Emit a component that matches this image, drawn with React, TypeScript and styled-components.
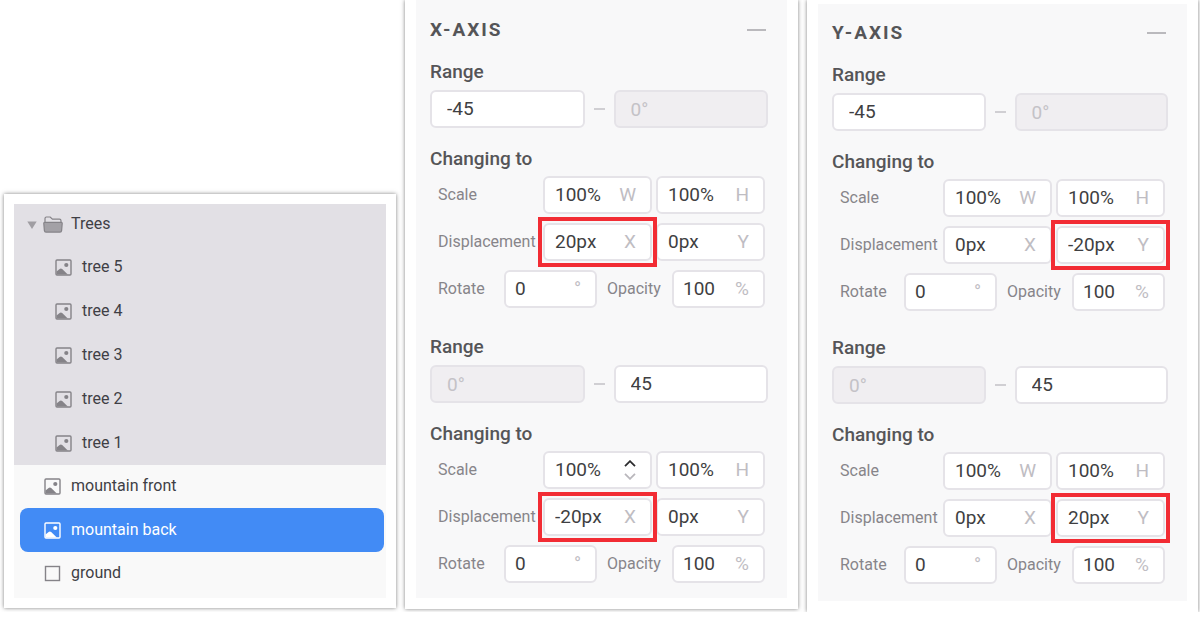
import React, { useId } from "react";
import styled, { createGlobalStyle, css } from "styled-components";

const GlobalStyle = createGlobalStyle`
  *, *::before, *::after { box-sizing: border-box; }
  body {
    margin: 0;
    background: #ffffff;
    color: #3f3f42;
    font-family: Roboto, "Liberation Sans", sans-serif;
  }
  button, input { font: inherit; color: inherit; }
`;

const Page = styled.main`
  display: grid;
  grid-template-columns: 392fr 393fr 391fr;
  gap: 9px;
  align-items: start;
  padding: 0 2px 0 4px;
`;

const Card = styled.section<{ $offset?: number; $padTop: number; $pad: number }>`
  min-width: 0;
  margin-top: ${(p) => p.$offset ?? 0}px;
  padding: ${(p) => p.$padTop}px ${(p) => p.$pad}px ${(p) => p.$pad}px;
  background: #ffffff;
  box-shadow: 0 0 4px rgba(0, 0, 0, 0.5);
`;

/* ---------- layer list ---------- */

const Layers = styled.ul`
  margin: 0;
  padding: 0 0 3px;
  list-style: none;
  background: #f9f9f9;
`;

const LayerGroup = styled.li`
  background: #e2e0e5;
`;

const GroupItems = styled.ul`
  margin: 0;
  padding: 0;
  list-style: none;
`;

const LayerItem = styled.li`
  padding: 0 2px 0 6px;
`;

const LayerButton = styled.button<{ $kind?: "group" | "child" | "selected" }>`
  display: flex;
  align-items: center;
  gap: 10px;
  width: 100%;
  height: 43px;
  padding: 0 0 0 24px;
  border: 0;
  border-radius: 8px;
  background: none;
  color: #3f3f45;
  font-size: 16px;
  line-height: 24px;
  text-align: left;
  ${(p) =>
    p.$kind === "group" &&
    css`
      height: 41px;
      padding-left: 7px;
      gap: 6px;
    `}
  ${(p) =>
    p.$kind === "child" &&
    css`
      height: 44px;
      padding-left: 35px;
    `}
  ${(p) =>
    p.$kind === "selected" &&
    css`
      height: 44px;
      background: #428bf5;
      color: #ffffff;
    `}
`;

const LayerName = styled.span`
  padding-bottom: 1px;
`;

const GroupName = styled(LayerName)`
  padding-left: 2px;
`;

const Glyph = styled.svg`
  display: block;
  flex: none;
  color: #858388;
`;

const LightGlyph = styled(Glyph)`
  color: #ffffff;
`;

const ImageShapes = () => (
  <>
    <rect x="1" y="1" width="15" height="15" rx="1" fill="none" stroke="currentColor" strokeWidth="1.4" />
    <circle cx="11.3" cy="6" r="2.1" fill="currentColor" />
    <path d="M1.5 15.5V12.4L4.6 10Q5.9 9.2 7.2 10L12.8 15.5Z" fill="currentColor" />
  </>
);

function ImageIcon({ light }: { light?: boolean }) {
  const Icon = light ? LightGlyph : Glyph;
  return (
    <Icon width="17" height="17" viewBox="0 0 17 17" aria-hidden="true">
      <ImageShapes />
    </Icon>
  );
}

function SquareIcon() {
  return (
    <Glyph width="17" height="17" viewBox="0 0 17 17" aria-hidden="true">
      <rect x="1.5" y="1.5" width="14" height="14" fill="none" stroke="currentColor" strokeWidth="1.4" />
    </Glyph>
  );
}

function ArrowIcon() {
  return (
    <Glyph width="10" height="8" viewBox="0 0 10 8" aria-hidden="true">
      <path d="M0.3 0.5H9.7L5 8Z" fill="#a09ea3" />
    </Glyph>
  );
}

function FolderIcon() {
  return (
    <Glyph width="20" height="17" viewBox="0 0 20 17" aria-hidden="true">
      <path
        d="M2 6V2.4Q2 1 3.4 1H7.2L9.4 3.2H16.4Q18 3.2 18 4.8V6"
        fill="none"
        stroke="currentColor"
        strokeWidth="1.2"
      />
      <path
        d="M1.8 6.4H18.2Q19.3 6.4 19.2 7.5L18.6 14.6Q18.4 16.1 17 16.1H3Q1.6 16.1 1.4 14.6L0.8 7.5Q0.7 6.4 1.8 6.4Z"
        fill="#a3a1a6"
        stroke="currentColor"
        strokeWidth="1.2"
      />
    </Glyph>
  );
}

/* ---------- axis settings ---------- */

const Settings = styled.div<{ $padTop: number; $padBottom: number }>`
  padding: ${(p) => p.$padTop}px 19px ${(p) => p.$padBottom}px 14px;
  background: #f8f8f9;
`;

const AxisHeader = styled.header`
  display: flex;
  align-items: center;
  justify-content: space-between;
  height: 24px;
  margin-bottom: 18px;
  padding-right: 2px;
`;

const AxisTitle = styled.h2`
  margin: 0;
  color: #555558;
  font-size: 19px;
  line-height: 24px;
  font-weight: 700;
  letter-spacing: 2px;
`;

const CollapseButton = styled.button`
  display: flex;
  align-items: center;
  height: 24px;
  padding: 0;
  border: 0;
  background: none;

  &::before {
    content: "";
    width: 19px;
    height: 2px;
    background: #bab9bd;
  }
`;

const Steps = styled.div<{ $gap: number }>`
  display: flex;
  flex-direction: column;
  gap: ${(p) => p.$gap}px;
`;

const Heading = styled.h3`
  margin: 0;
  color: #555558;
  font-size: 19px;
  line-height: 24px;
  font-weight: 500;
`;

const RangeRow = styled.div`
  display: flex;
  align-items: center;
  margin: 6px 0 19px;
`;

const RangeInput = styled.input`
  flex: 1;
  min-width: 0;
  height: 38px;
  padding: 0 15px 2px;
  border: 2px solid #e5e3e8;
  border-radius: 6px;
  background: #ffffff;
  font-size: 19px;

  &:disabled {
    padding: 1px 15px 0;
    background: #f0eef1;
    color: #c4c2c7;
  }
`;

const Dash = styled.span`
  width: 11px;
  height: 2px;
  margin: 0 9px;
  background: #d0cfd3;
`;

const Rows = styled.div`
  display: grid;
  gap: 9px;
  margin-top: 5px;
  padding: 0 3px 0 8px;
`;

const Row = styled.div`
  display: flex;
  align-items: center;
  gap: 4px;
`;

const SplitRow = styled(Row)`
  gap: 0;
`;

const Label = styled.label`
  flex: 1;
  min-width: 0;
  color: #87858a;
  font-size: 16px;
  line-height: 24px;
  white-space: nowrap;
`;

const MiddleLabel = styled(Label)`
  flex: 0 0 75px;
  padding-left: 10px;
`;

const Field = styled.div<{ $narrow?: boolean; $marked?: boolean }>`
  position: relative;
  display: flex;
  align-items: center;
  flex: none;
  width: ${(p) => (p.$narrow ? 93 : 109)}px;
  height: 38px;
  padding: 0 14px 0 ${(p) => (p.$narrow ? 9 : 10)}px;
  border: 2px solid #e5e3e8;
  border-radius: 6px;
  background: #ffffff;
  ${(p) =>
    p.$marked &&
    css`
      z-index: 1;
      &::after {
        content: "";
        position: absolute;
        inset: -8px -7px;
        border: 4px solid #f22c34;
        pointer-events: none;
      }
    `}
`;

const FieldInput = styled.input`
  flex: 1;
  width: 0;
  min-width: 0;
  padding: 0;
  border: 0;
  background: none;
  font-size: 19px;
  line-height: 24px;
  outline: none;
`;

const Unit = styled.span`
  color: #bfbdc3;
  font-size: 19px;
  line-height: 24px;
`;

const Stepper = styled.span`
  display: grid;
  gap: 6px;
`;

const StepButton = styled.button<{ $faded?: boolean }>`
  display: block;
  padding: 0;
  border: 0;
  background: none;
  color: ${(p) => (p.$faded ? "#b9b7bc" : "#2c2c2e")};

  svg {
    display: block;
  }
`;

type FieldProps = {
  id?: string;
  name?: string;
  value: string;
  unit: string;
  narrow?: boolean;
  marked?: boolean;
};

function ValueField({ id, name, value, unit, narrow, marked }: FieldProps) {
  return (
    <Field $narrow={narrow} $marked={marked}>
      <FieldInput id={id} aria-label={name} defaultValue={value} />
      {unit === "stepper" ? (
        <Stepper>
          <StepButton type="button" aria-label="Increase">
            <svg width="12" height="7" viewBox="0 0 12 7" aria-hidden="true">
              <path d="M1 6.2L6 1.2L11 6.2" fill="none" stroke="currentColor" strokeWidth="1.8" />
            </svg>
          </StepButton>
          <StepButton type="button" aria-label="Decrease" $faded>
            <svg width="12" height="7" viewBox="0 0 12 7" aria-hidden="true">
              <path d="M1 0.8L6 5.8L11 0.8" fill="none" stroke="currentColor" strokeWidth="1.8" />
            </svg>
          </StepButton>
        </Stepper>
      ) : (
        <Unit>{unit}</Unit>
      )}
    </Field>
  );
}

type StepData = {
  from: string | null;
  to: string | null;
  x: string;
  y: string;
  marked: "x" | "y";
  stepper?: boolean;
};

function RangeBox({ name, value }: { name: string; value: string | null }) {
  return <RangeInput aria-label={name} defaultValue={value ?? "0°"} disabled={value === null} />;
}

function AxisStep({ data }: { data: StepData }) {
  const id = useId();
  return (
    <div>
      <Heading>Range</Heading>
      <RangeRow>
        <RangeBox name="Range from" value={data.from} />
        <Dash />
        <RangeBox name="Range to" value={data.to} />
      </RangeRow>
      <Heading>Changing to</Heading>
      <Rows>
        <Row>
          <Label htmlFor={`${id}-scale`}>Scale</Label>
          <ValueField id={`${id}-scale`} value="100%" unit={data.stepper ? "stepper" : "W"} />
          <ValueField name="Scale height" value="100%" unit="H" />
        </Row>
        <Row>
          <Label htmlFor={`${id}-move`}>Displacement</Label>
          <ValueField id={`${id}-move`} value={data.x} unit="X" marked={data.marked === "x"} />
          <ValueField name="Displacement Y" value={data.y} unit="Y" marked={data.marked === "y"} />
        </Row>
        <SplitRow>
          <Label htmlFor={`${id}-rotate`}>Rotate</Label>
          <ValueField id={`${id}-rotate`} value="0" unit="°" narrow />
          <MiddleLabel htmlFor={`${id}-opacity`}>Opacity</MiddleLabel>
          <ValueField id={`${id}-opacity`} value="100" unit="%" narrow />
        </SplitRow>
      </Rows>
    </div>
  );
}

type AxisProps = {
  title: string;
  padTop: number;
  padBottom: number;
  gap: number;
  steps: StepData[];
};

function AxisSettings({ title, padTop, padBottom, gap, steps }: AxisProps) {
  return (
    <Settings $padTop={padTop} $padBottom={padBottom}>
      <AxisHeader>
        <AxisTitle>{title}</AxisTitle>
        <CollapseButton type="button" aria-label={`Collapse ${title}`} />
      </AxisHeader>
      <Steps $gap={gap}>
        {steps.map((step, i) => (
          <AxisStep key={i} data={step} />
        ))}
      </Steps>
    </Settings>
  );
}

const xSteps: StepData[] = [
  { from: "-45", to: null, x: "20px", y: "0px", marked: "x" },
  { from: null, to: "45", x: "-20px", y: "0px", marked: "x", stepper: true },
];

const ySteps: StepData[] = [
  { from: "-45", to: null, x: "0px", y: "-20px", marked: "y" },
  { from: null, to: "45", x: "0px", y: "20px", marked: "y" },
];

const trees = ["tree 5", "tree 4", "tree 3", "tree 2", "tree 1"];

export default function App() {
  return (
    <>
      <GlobalStyle />
      <Page>
        <Card $offset={194} $padTop={10} $pad={10}>
          <Layers>
            <LayerGroup>
              <LayerItem as="div">
                <LayerButton type="button" $kind="group" aria-expanded="true">
                  <ArrowIcon />
                  <FolderIcon />
                  <GroupName>Trees</GroupName>
                </LayerButton>
              </LayerItem>
              <GroupItems>
                {trees.map((name) => (
                  <LayerItem key={name}>
                    <LayerButton type="button" $kind="child">
                      <ImageIcon />
                      <LayerName>{name}</LayerName>
                    </LayerButton>
                  </LayerItem>
                ))}
              </GroupItems>
            </LayerGroup>
            <LayerItem>
              <LayerButton type="button">
                <ImageIcon />
                <LayerName>mountain front</LayerName>
              </LayerButton>
            </LayerItem>
            <LayerItem>
              <LayerButton type="button" $kind="selected" aria-pressed="true">
                <ImageIcon light />
                <LayerName>mountain back</LayerName>
              </LayerButton>
            </LayerItem>
            <LayerItem>
              <LayerButton type="button">
                <SquareIcon />
                <LayerName>ground</LayerName>
              </LayerButton>
            </LayerItem>
          </Layers>
        </Card>
        <Card $padTop={0} $pad={11}>
          <AxisSettings title="X-AXIS" padTop={18} padBottom={15} gap={27} steps={xSteps} />
        </Card>
        <Card $padTop={4} $pad={11}>
          <AxisSettings title="Y-AXIS" padTop={17} padBottom={17} gap={25} steps={ySteps} />
        </Card>
      </Page>
    </>
  );
}
